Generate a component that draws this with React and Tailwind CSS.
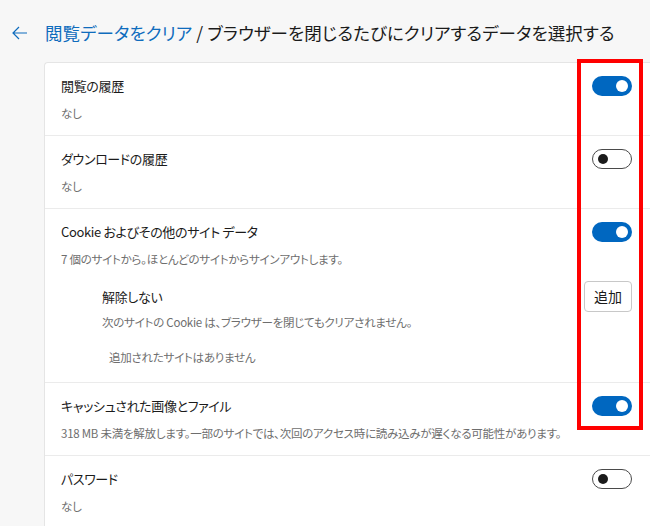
import React from "react";

const font = { fontFamily: '"Noto Sans CJK JP", "Noto Sans", sans-serif' };

const Toggle = ({ on }) => {
    if (on) {
        return (
            <div className="flex h-5 w-10 shrink-0 items-center justify-end rounded-full bg-[#0067c0] pr-1">
                <div className="h-3 w-3 rounded-full bg-white" />
            </div>
        );
    }
    return (
        <div className="flex h-5 w-10 shrink-0 items-center rounded-full border border-[#4a4a4a] bg-white pl-[5px]">
            <div className="h-[10px] w-[10px] rounded-full bg-[#1b1b1b]" />
        </div>
    );
};

const Row = ({ label, sub, on, last }) => (
    <div className={"flex items-start justify-between pl-4 pr-5 pt-[13px] pb-[14px]" + (last ? "" : " border-b border-[#ebebeb]")}>
        <div>
            <p className="text-[13px] leading-5 tracking-[-0.35px] text-[#1b1b1b]">{label}</p>
            <p className="mt-[9px] text-[11.5px] leading-4 tracking-[-0.25px] text-[#6e6e6e]">{sub}</p>
        </div>
        <Toggle on={on} />
    </div>
);

export default function App() {
    return (
        <div className="relative h-[526px] w-[650px] overflow-hidden bg-[#f7f7f7] [font-feature-settings:'palt']" style={font}>
            <div className="flex h-[62px] items-center pl-3 pt-[4px]">
                <svg width="16" height="14" viewBox="0 0 16 14" className="shrink-0">
                    <path d="M7 1 L1 7 L7 13 M1 7 H15" fill="none" stroke="#0f6cbd" strokeWidth="1.2" />
                </svg>
                <h1 className="ml-[17px] whitespace-nowrap text-[17.5px] leading-7 tracking-[0.1px] text-[#1b1b1b]">
                    <span className="text-[#0f6cbd]">閲覧データをクリア</span> / ブラウザーを閉じるたびにクリアするデータを選択する
                </h1>
            </div>

            <div className="ml-11 w-[608px] rounded-tl border-l border-t border-[#e5e5e5] bg-white">
                <Row label="閲覧の履歴" sub="なし" on />
                <Row label="ダウンロードの履歴" sub="なし" on={false} />

                <div className="border-b border-[#ebebeb] pl-4 pr-5 pt-[13px]">
                    <div className="flex items-start justify-between">
                        <div>
                            <p className="text-[13px] leading-5 tracking-[-0.35px] text-[#1b1b1b]">Cookie およびその他のサイト データ</p>
                            <p className="mt-[9px] text-[11.5px] leading-4 tracking-[-0.25px] text-[#6e6e6e]">7 個のサイトから。ほとんどのサイトからサインアウトします。</p>
                        </div>
                        <Toggle on />
                    </div>
                    <div className="mt-[14px] flex items-start justify-between pl-[41px]">
                        <div className="pt-[6px]">
                            <p className="text-[13px] leading-5 tracking-[-0.35px] text-[#1b1b1b]">解除しない</p>
                            <p className="mt-[7px] text-[11.5px] leading-4 tracking-[-0.25px] text-[#6e6e6e]">次のサイトの Cookie は、ブラウザーを閉じてもクリアされません。</p>
                        </div>
                        <button className="h-[31px] w-12 rounded-sm border border-[#c8c8c8] bg-white text-[14px] text-[#1b1b1b]">追加</button>
                    </div>
                    <p className="ml-12 mt-[19px] pb-[17px] text-[11.5px] leading-4 tracking-[-0.25px] text-[#6e6e6e]">追加されたサイトはありません</p>
                </div>

                <Row label="キャッシュされた画像とファイル" sub="318 MB 未満を解放します。一部のサイトでは、次回のアクセス時に読み込みが遅くなる可能性があります。" on />
                <Row label="パスワード" sub="なし" on={false} last />
            </div>

            <div className="absolute left-[577px] top-[59px] h-[371px] w-[66px] border-4 border-[#ff0000]" />
        </div>
    );
}
